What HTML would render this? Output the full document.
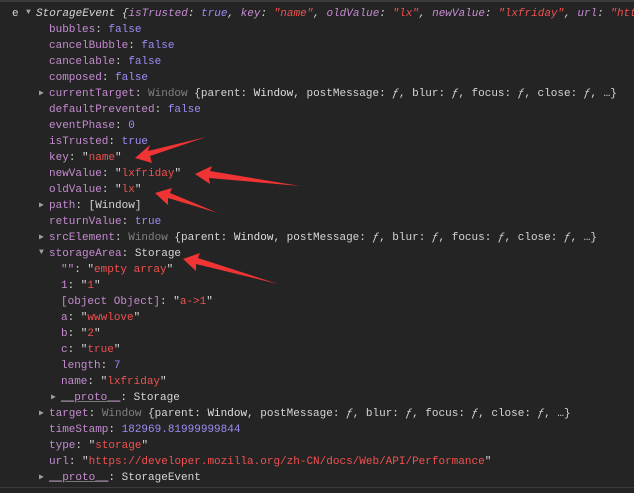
<!DOCTYPE html>
<html><head><meta charset="utf-8"><style>
html,body{margin:0;width:634px;height:493px;overflow:hidden}
body{background:#242424;font-family:"Liberation Mono",monospace;font-size:11px;color:#d5d5d5;position:relative}
.top{position:absolute;left:0;top:0;width:634px;height:2px;background:#3a3a3a}
.bot{position:absolute;left:0;top:487px;width:634px;height:1px;background:#3a3a3a}
.r{position:absolute;white-space:pre;height:16px;line-height:16px;overflow:hidden}
.k{color:#c58bd0}.b{color:#9d8bf5}.s{color:#f0504f}.g{color:#808080}.w{color:#e0e0e0}.n{color:#9d8bf5}
.i{font-style:italic}
.t{position:absolute;color:#a0a0a0;font-size:8px}
.d{text-decoration:underline;text-decoration-color:#777}
</style></head><body>
<div class="top"></div>
<div class="r" style="left:12px;top:6px">e</div>
<div class="t" style="left:26px;top:8px">▼</div>
<div class="r i" style="left:36px;top:6px;width:598px">StorageEvent {<span class="k">isTrusted</span>: <span class="b">true</span>, <span class="k">key</span>: <span class="s">"name"</span>, <span class="k">oldValue</span>: <span class="s">"lx"</span>, <span class="k">newValue</span>: <span class="s">"lxfriday"</span>, <span class="k">url</span>: <span class="s">"https://</span></div>

<div class="r" style="left:49px;top:22px"><span class="k">bubbles</span>: <span class="b">false</span></div>
<div class="r" style="left:49px;top:38px"><span class="k">cancelBubble</span>: <span class="b">false</span></div>
<div class="r" style="left:49px;top:54px"><span class="k">cancelable</span>: <span class="b">false</span></div>
<div class="r" style="left:49px;top:70px"><span class="k">composed</span>: <span class="b">false</span></div>
<div class="t" style="left:39px;top:88px">▶</div>
<div class="r" style="left:49px;top:86px"><span class="k">currentTarget</span>: <span class="g">Window</span> {parent: <span class="w">Window</span>, postMessage: <i>ƒ</i>, blur: <i>ƒ</i>, focus: <i>ƒ</i>, close: <i>ƒ</i>, …}</div>
<div class="r" style="left:49px;top:102px"><span class="k">defaultPrevented</span>: <span class="b">false</span></div>
<div class="r" style="left:49px;top:118px"><span class="k">eventPhase</span>: <span class="n">0</span></div>
<div class="r" style="left:49px;top:134px"><span class="k">isTrusted</span>: <span class="b">true</span></div>
<div class="r" style="left:49px;top:150px"><span class="k">key</span>: "<span class="s">name</span>"</div>
<div class="r" style="left:49px;top:166px"><span class="k">newValue</span>: "<span class="s">lxfriday</span>"</div>
<div class="r" style="left:49px;top:182px"><span class="k">oldValue</span>: "<span class="s">lx</span>"</div>
<div class="t" style="left:39px;top:200px">▶</div>
<div class="r" style="left:49px;top:198px"><span class="k">path</span>: [Window]</div>
<div class="r" style="left:49px;top:214px"><span class="k">returnValue</span>: <span class="b">true</span></div>
<div class="t" style="left:39px;top:232px">▶</div>
<div class="r" style="left:49px;top:230px"><span class="k">srcElement</span>: <span class="g">Window</span> {parent: <span class="w">Window</span>, postMessage: <i>ƒ</i>, blur: <i>ƒ</i>, focus: <i>ƒ</i>, close: <i>ƒ</i>, …}</div>
<div class="t" style="left:39px;top:248px">▼</div>
<div class="r" style="left:49px;top:246px"><span class="k">storageArea</span>: Storage</div>
<div class="r" style="left:61px;top:262px"><span class="k">""</span>: "<span class="s">empty array</span>"</div>
<div class="r" style="left:61px;top:278px"><span class="k">1</span>: "<span class="s">1</span>"</div>
<div class="r" style="left:61px;top:294px"><span class="k">[object Object]</span>: "<span class="s">a-&gt;1</span>"</div>
<div class="r" style="left:61px;top:310px"><span class="k">a</span>: "<span class="s">wwwlove</span>"</div>
<div class="r" style="left:61px;top:326px"><span class="k">b</span>: "<span class="s">2</span>"</div>
<div class="r" style="left:61px;top:342px"><span class="k">c</span>: "<span class="s">true</span>"</div>
<div class="r" style="left:61px;top:358px"><span class="k">length</span>: <span class="n">7</span></div>
<div class="r" style="left:61px;top:374px"><span class="k">name</span>: "<span class="s">lxfriday</span>"</div>
<div class="t" style="left:51px;top:392px">▶</div>
<div class="r" style="left:61px;top:390px"><span class="k d">__proto__</span>: Storage</div>
<div class="t" style="left:39px;top:408px">▶</div>
<div class="r" style="left:49px;top:406px"><span class="k">target</span>: <span class="g">Window</span> {parent: <span class="w">Window</span>, postMessage: <i>ƒ</i>, blur: <i>ƒ</i>, focus: <i>ƒ</i>, close: <i>ƒ</i>, …}</div>
<div class="r" style="left:49px;top:422px"><span class="k">timeStamp</span>: <span class="n">182969.81999999844</span></div>
<div class="r" style="left:49px;top:438px"><span class="k">type</span>: "<span class="s">storage</span>"</div>
<div class="r" style="left:49px;top:454px"><span class="k">url</span>: "<span class="s">https://developer.mozilla.org/zh-CN/docs/Web/API/Performance</span>"</div>
<div class="t" style="left:39px;top:472px">▶</div>
<div class="r" style="left:49px;top:470px"><span class="k d">__proto__</span>: StorageEvent</div>
<div class="bot"></div>

<svg width="634" height="493" style="position:absolute;left:0;top:0" fill="#f03434">
<polygon points="135,158 150,145 148,151 206,137 150,156 152,163"/>
<polygon points="195,174 212,166 210,171 300,186 209,178 210,184"/>
<polygon points="155,193 172,188 170,193 218,213 168,198 168,205"/>
<polygon points="183,259 200,253 198,258 278,284 196,264 196,271"/>
</svg>
</body></html>
